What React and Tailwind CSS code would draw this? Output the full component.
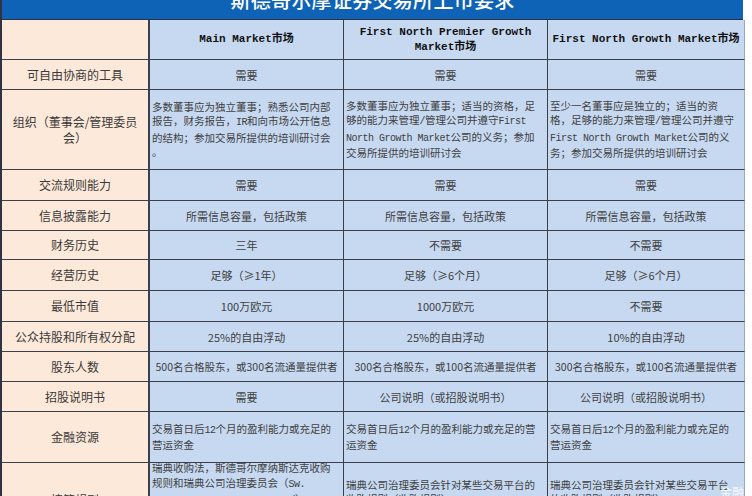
import React from "react";

const COLS = "grid grid-cols-[148px_194px_204px_197px]";
const CJK = "font-['Noto_Sans_CJK_SC',sans-serif]";
const MONO = "font-['Liberation_Mono','Noto_Sans_CJK_SC',monospace]";

function Mixed({ text }) {
  const parts = text.split(/([\x20-\x7E]+)/);
  return parts.map((p, i) =>
    /^[\x20-\x7E]+$/.test(p) ? (
      <span key={i} className="font-['Liberation_Mono',monospace] text-[10px] tracking-[-0.5px]">
        {p}
      </span>
    ) : (
      <React.Fragment key={i}>{p}</React.Fragment>
    )
  );
}

function Label({ children }) {
  return (
    <div className={`flex items-center justify-center text-center bg-[#fde9d9] border-r-2 border-b border-[#3a3f4c] px-1 text-[12px] leading-[16px] text-[#3a3a3a] whitespace-nowrap ${CJK}`}>
      <div>{children}</div>
    </div>
  );
}

function Cell({ children, para, last, small }) {
  return (
    <div
      className={`flex items-center bg-[#c6d9f1] border-b border-[#3a3f4c] ${last ? "border-r border-r-[#9aa8bc]" : "border-r"} ${
        para ? "justify-start text-left pl-[2px] pr-[1px] text-[10.5px] leading-[14.4px]" : `justify-center text-center px-1 ${small ? "text-[10.5px]" : "text-[11px]"} leading-[14px]`
      } ${CJK} text-[#404040] whitespace-nowrap overflow-hidden`}
    >
      <div>{children}</div>
    </div>
  );
}

function Row({ h, label, cells }) {
  return (
    <div className={`${COLS} ${h}`}>
      <Label>{label}</Label>
      {cells.map((c, i) => (
        <Cell key={i} para={c.para} small={c.small} last={i === 2}>
          {c.lines
            ? c.lines.map((l, j) => (
                <div key={j}>
                  <Mixed text={l} />
                </div>
              ))
            : c.t}
        </Cell>
      ))}
    </div>
  );
}

export default function App() {
  const same = (t) => [{ t }, { t }, { t }];
  const head = `flex items-center justify-center text-center bg-[#c6d9f1] border-b border-[#3a3f4c] text-[11px] leading-[15px] font-bold text-[#111] whitespace-nowrap ${MONO}`;
  return (
    <div className="relative w-[752px] h-[496px] overflow-hidden bg-white">
      <div className="w-[743px] border-l-2 border-[#2f3440]">
        <div className="h-[20px] overflow-hidden bg-[#0f63b6] border-b border-[#2b3140]">
          <div className={`-mt-[12px] text-center text-[20px] leading-[24px] text-white font-medium tracking-[0.3px] ${CJK}`}>
            斯德哥尔摩证券交易所上市要求
          </div>
        </div>

        <div className={`${COLS} h-[40px]`}>
          <div className="bg-[#fde9d9] border-r-2 border-b border-[#3a3f4c]" />
          <div className={`${head} border-r`}>Main Market市场</div>
          <div className={`${head} border-r`}>
            <div>
              <div>First North Premier Growth</div>
              <div>Market市场</div>
            </div>
          </div>
          <div className={`${head} border-r border-r-[#9aa8bc]`}>First North Growth Market市场</div>
        </div>

        <Row h="h-[30px]" label="可自由协商的工具" cells={same("需要")} />
        <Row
          h="h-[80px]"
          label={<><div>组织（董事会/管理委员</div><div>会）</div></>}
          cells={[
            { para: true, lines: ["多数董事应为独立董事；熟悉公司内部", "报告，财务报告，IR和向市场公开信息", "的结构；参加交易所提供的培训研讨会", "。"] },
            { para: true, lines: ["多数董事应为独立董事；适当的资格，足", "够的能力来管理/管理公司并遵守First", "North Growth Market公司的义务；参加", "交易所提供的培训研讨会"] },
            { para: true, lines: ["至少一名董事应是独立的；适当的资", "格，足够的能力来管理/管理公司并遵守", "First North Growth Market公司的义", "务；参加交易所提供的培训研讨会"] },
          ]}
        />
        <Row h="h-[31px]" label="交流规则能力" cells={same("需要")} />
        <Row h="h-[30px]" label="信息披露能力" cells={same("所需信息容量，包括政策")} />
        <Row h="h-[29px]" label="财务历史" cells={[{ t: "三年" }, { t: "不需要" }, { t: "不需要" }]} />
        <Row h="h-[31px]" label="经营历史" cells={[{ t: "足够（≥1年）" }, { t: "足够（≥6个月）" }, { t: "足够（≥6个月）" }]} />
        <Row h="h-[31px]" label="最低市值" cells={[{ t: "100万欧元" }, { t: "1000万欧元" }, { t: "不需要" }]} />
        <Row h="h-[30px]" label="公众持股和所有权分配" cells={[{ t: "25%的自由浮动" }, { t: "25%的自由浮动" }, { t: "10%的自由浮动" }]} />
        <Row
          h="h-[30px]"
          label="股东人数"
          cells={[
            { t: "500名合格股东，或300名流通量提供者", small: true },
            { t: "300名合格股东，或100名流通量提供者", small: true },
            { t: "300名合格股东，或100名流通量提供者", small: true },
          ]}
        />
        <Row h="h-[30px]" label="招股说明书" cells={[{ t: "需要" }, { t: "公司说明（或招股说明书）" }, { t: "公司说明（或招股说明书）" }]} />
        <Row
          h="h-[51px]"
          label="金融资源"
          cells={[
            { para: true, lines: ["交易首日后12个月的盈利能力或充足的", "营运资金"] },
            { para: true, lines: ["交易首日后12个月的盈利能力或充足的营", "运资金"] },
            { para: true, lines: ["交易首日后12个月的盈利能力或充足的", "营运资金"] },
          ]}
        />
        <Row
          h="h-[74px]"
          label="接管规则"
          cells={[
            { para: true, lines: ["瑞典收购法，斯德哥尔摩纳斯达克收购", "规则和瑞典公司治理委员会（Sw.", "Corporate Governance Board）", "针对某些交易平台的收购规则", "（收购规则）"] },
            { para: true, lines: ["瑞典公司治理委员会针对某些交易平台的", "收购规则（收购规则）", "以及瑞典收购法"] },
            { para: true, lines: ["瑞典公司治理委员会针对某些交易平台", "的收购规则（收购规则）", "以及瑞典收购法"] },
          ]}
        />
      </div>
      <div className={`absolute left-[720px] top-[485px] text-[12px] leading-[14px] text-white opacity-90 ${CJK}`}>
        金融号
      </div>
    </div>
  );
}
